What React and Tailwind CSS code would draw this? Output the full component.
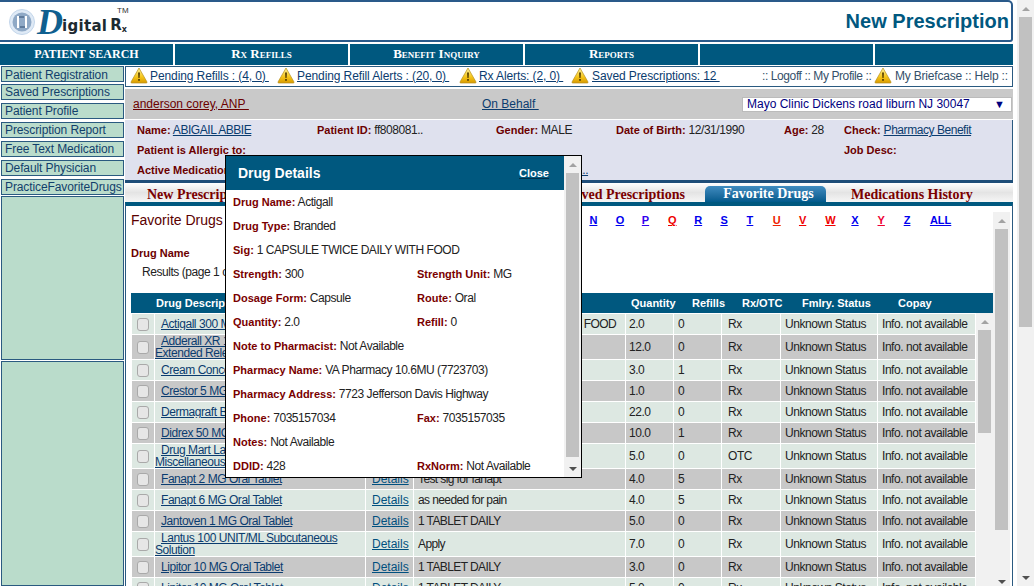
import React from "react";

const sidebarLinks = [
  "Patient Registration",
  "Saved Prescriptions",
  "Patient Profile",
  "Prescription Report",
  "Free Text Medication",
  "Default Physician",
  "PracticeFavoriteDrugs",
];

const letters = [
  ["A", "text-[#0000ee]"], ["B", "text-[#0000ee]"], ["C", "text-[#0000ee]"], ["D", "text-[#0000ee]"],
  ["E", "text-[#0000ee]"], ["F", "text-[#0000ee]"], ["G", "text-[#0000ee]"], ["H", "text-[#0000ee]"],
  ["I", "text-[#0000ee]"], ["J", "text-[#0000ee]"], ["K", "text-[#0000ee]"], ["L", "text-[#0000ee]"],
  ["M", "text-[#0000ee]"], ["N", "text-[#0000ee]"], ["O", "text-[#0000ee]"], ["P", "text-[#3300ee]"],
  ["Q", "text-[#ee0000]"], ["R", "text-[#0000ee]"], ["S", "text-[#0000ee]"], ["T", "text-[#0000ee]"],
  ["U", "text-[#ee2200]"], ["V", "text-[#ee0000]"], ["W", "text-[#ee0000]"], ["X", "text-[#0000ee]"],
  ["Y", "text-[#ee0033]"], ["Z", "text-[#0000ee]"],
];

const drugs = [
  { name: ["Actigall 300 MG Oral Capsule"], sig: "1 CAPSULE TWICE DAILY WITH FOOD", qty: "2.0", refills: "0", type: "Rx" },
  { name: ["Adderall XR 10 MG 24 HR", "Extended Release Capsule"], sig: "1 CAPSULE DAILY", qty: "12.0", refills: "0", type: "Rx" },
  { name: ["Cream Concentrate"], sig: "Apply", qty: "3.0", refills: "1", type: "Rx" },
  { name: ["Crestor 5 MG Oral Tablet"], sig: "1 TABLET DAILY", qty: "1.0", refills: "0", type: "Rx" },
  { name: ["Dermagraft Bandage"], sig: "Apply", qty: "22.0", refills: "0", type: "Rx" },
  { name: ["Didrex 50 MG Oral Tablet"], sig: "1 TABLET DAILY", qty: "10.0", refills: "1", type: "Rx" },
  { name: ["Drug Mart Laxative", "Miscellaneous"], sig: "1 TABLET DAILY", qty: "5.0", refills: "0", type: "OTC" },
  { name: ["Fanapt 2 MG Oral Tablet"], sig: "Test sig for fanapt", qty: "4.0", refills: "5", type: "Rx" },
  { name: ["Fanapt 6 MG Oral Tablet"], sig: "as needed for pain", qty: "4.0", refills: "5", type: "Rx" },
  { name: ["Jantoven 1 MG Oral Tablet"], sig: "1 TABLET DAILY", qty: "5.0", refills: "0", type: "Rx" },
  { name: ["Lantus 100 UNIT/ML Subcutaneous", "Solution"], sig: "Apply", qty: "7.0", refills: "0", type: "Rx" },
  { name: ["Lipitor 10 MG Oral Tablet"], sig: "1 TABLET DAILY", qty: "3.0", refills: "0", type: "Rx" },
  { name: ["Lipitor 10 MG Oral Tablet"], sig: "1 TABLET DAILY", qty: "5.0", refills: "0", type: "Rx" },
];

function Warning() {
  return (
    <svg width="18" height="17" viewBox="0 0 18 17" className="shrink-0">
      <defs>
        <linearGradient id="warn" x1="0" y1="0" x2="0" y2="1">
          <stop offset="0" stopColor="#fff3a0" />
          <stop offset="0.6" stopColor="#f5c518" />
          <stop offset="1" stopColor="#d99a00" />
        </linearGradient>
      </defs>
      <path d="M9 1 L17 15 Q17.5 16 16 16 L2 16 Q0.5 16 1 15 Z" fill="url(#warn)" stroke="#b8901c" strokeWidth="0.7" />
      <path d="M8 5.5 H10 L9.6 11 H8.4 Z" fill="#5a4200" />
      <rect x="8.1" y="12" width="1.8" height="1.8" fill="#5a4200" />
    </svg>
  );
}

function Scrollbar({ thumbHeight, arrows = true, className = "" }) {
  return (
    <div className={`flex flex-col items-center bg-[#f1f1f1] shrink-0 w-[17px] ${className}`}>
      <div className="h-[17px] w-full flex items-center justify-center shrink-0">
        <div className="w-0 h-0 border-x-[4px] border-x-transparent border-b-[4px] border-b-[#a3a3a3]" />
      </div>
      <div className="flex-1 w-full px-[2px] flex flex-col min-h-0">
        <div style={{ height: thumbHeight }} className="bg-[#c1c1c1] shrink-0" />
      </div>
      {arrows && (
        <div className="h-[17px] w-full flex items-center justify-center shrink-0">
          <div className="w-0 h-0 border-x-[4px] border-x-transparent border-t-[4px] border-t-[#505050]" />
        </div>
      )}
    </div>
  );
}

function Logo() {
  return (
    <div className="flex items-start h-full pl-[9px] relative tracking-normal">
      <svg width="26" height="26" viewBox="0 0 26 26" className="mt-[7px]">
        <circle cx="13" cy="13" r="12.5" fill="#dfeaf6" stroke="#c3d6ea" />
        <circle cx="13" cy="13" r="9.5" fill="#8fa9c6" />
        <path d="M9 7 V19 M17 7 V19" stroke="#ffffff" strokeWidth="2" fill="none" />
        <path d="M10 8 H15 M11 18 H16" stroke="#2f4d70" strokeWidth="1" fill="none" />
      </svg>
      <span className="text-[36px] leading-[36px] mt-[2px] ml-[2px] italic font-bold text-[#0f5f8f] font-['Liberation_Serif',serif] w-[25px]">
        D
      </span>
      <span className="text-[15px] leading-[20px] mt-[14px] font-bold text-[#1d2a30] font-['DejaVu_Sans',sans-serif] tracking-[0.3px]">
        igital
      </span>
      <span className="text-[15px] leading-[18px] mt-[14px] ml-[3px] font-bold text-[#1d2a30] font-['DejaVu_Sans',sans-serif]">
        R
      </span>
      <span className="text-[8px] leading-[10px] mt-[23px] font-bold text-[#1d2a30] font-['DejaVu_Sans',sans-serif]">
        x
      </span>
      <span className="absolute left-[117px] top-[5px] text-[8px] leading-[8px] text-[#333]">TM</span>
    </div>
  );
}

function NavCell({ children, caps, className = "" }) {
  return (
    <div
      className={`h-full bg-[#00587f] flex items-center justify-center pb-[1px] text-white font-bold tracking-normal font-['Liberation_Serif',serif] ${
        caps ? "text-[13px] [font-variant:small-caps]" : "text-[12px]"
      } ${className}`}
    >
      {children}
    </div>
  );
}

function Field({ label, children, className = "" }) {
  return (
    <div className={`shrink-0 whitespace-nowrap ${className}`}>
      <span className="font-bold text-[11px] tracking-normal text-[#6b0000]">{label}</span> {children}
    </div>
  );
}

function ModalRow({ left, right }) {
  return (
    <div className="h-[24px] flex items-center pl-[7px] whitespace-nowrap text-[#222]">
      <div className={right ? "w-[184px] shrink-0" : ""}>
        <span className="font-bold text-[11px] tracking-normal text-[#7a0000]">{left[0]}:</span> {left[1]}
      </div>
      {right && (
        <div>
          <span className="font-bold text-[11px] tracking-normal text-[#7a0000]">{right[0]}:</span> {right[1]}
        </div>
      )}
    </div>
  );
}

function DrugModal() {
  return (
    <div className="absolute left-[225px] top-[155px] w-[357px] h-[323px] bg-white border border-black flex overflow-hidden">
      <div className="flex-1 min-w-0">
        <div className="h-[34px] bg-[#00587f] flex items-center justify-between pl-[12px] pr-[15px] text-white font-bold tracking-normal">
          <span className="text-[14px]">Drug Details</span>
          <span className="text-[11px] underline decoration-[#00304a]">Close</span>
        </div>
        <ModalRow left={["Drug Name", "Actigall"]} />
        <ModalRow left={["Drug Type", "Branded"]} />
        <ModalRow left={["Sig", "1 CAPSULE TWICE DAILY WITH FOOD"]} />
        <ModalRow left={["Strength", "300"]} right={["Strength Unit", "MG"]} />
        <ModalRow left={["Dosage Form", "Capsule"]} right={["Route", "Oral"]} />
        <ModalRow left={["Quantity", "2.0"]} right={["Refill", "0"]} />
        <ModalRow left={["Note to Pharmacist", "Not Available"]} />
        <ModalRow left={["Pharmacy Name", "VA Pharmacy 10.6MU (7723703)"]} />
        <ModalRow left={["Pharmacy Address", "7723 Jefferson Davis Highway"]} />
        <ModalRow left={["Phone", "7035157034"]} right={["Fax", "7035157035"]} />
        <ModalRow left={["Notes", "Not Available"]} />
        <ModalRow left={["DDID", "428"]} right={["RxNorm", "Not Available"]} />
      </div>
      <Scrollbar thumbHeight={284} />
    </div>
  );
}

function DrugTable() {
  return (
    <table className="table-fixed border-separate border-spacing-[1px] w-[845px] shrink-0 text-[#222]">
      <colgroup>
        <col className="w-[22px]" />
        <col className="w-[210px]" />
        <col className="w-[47px]" />
        <col className="w-[211px]" />
        <col className="w-[47px]" />
        <col className="w-[47px]" />
        <col className="w-[58px]" />
        <col className="w-[96px]" />
        <col className="w-[97px]" />
      </colgroup>
      <tbody>
        {drugs.map((d, i) => {
          const bg = i % 2 === 0 ? "bg-[#dde8e2]" : "bg-[#c8c8c8]";
          const h = d.name.length > 1 ? "h-[24px]" : "h-[20px]";
          return (
            <tr key={i}>
              <td className={`${bg} ${h} p-0 text-center`}>
                <input
                  type="checkbox"
                  readOnly
                  className="appearance-none block mx-auto w-[12px] h-[13px] rounded-[3px] bg-[#e6e6e6] border border-[#a9a9a9]"
                />
              </td>
              <td className={`${bg} p-0 leading-[12px] text-[#0b3c6f] underline`}>
                <div className="indent-[6px] whitespace-nowrap overflow-hidden">
                  {d.name[0]}
                  {d.name[1] && <br />}
                  {d.name[1]}
                </div>
              </td>
              <td className={`${bg} p-0 pl-[6px] tracking-normal text-[#00507f] underline`}>Details</td>
              <td className={`${bg} p-0 pl-[4px] tracking-[-0.6px] whitespace-nowrap overflow-hidden`}>{d.sig}</td>
              <td className={`${bg} p-0 pl-[3px]`}>{d.qty}</td>
              <td className={`${bg} p-0 pl-[4px]`}>{d.refills}</td>
              <td className={`${bg} p-0 pl-[6px]`}>{d.type}</td>
              <td className={`${bg} p-0 pl-[4px] whitespace-nowrap`}>Unknown Status</td>
              <td className={`${bg} p-0 pl-[4px] whitespace-nowrap`}>Info. not available</td>
            </tr>
          );
        })}
      </tbody>
    </table>
  );
}

export default function App() {
  return (
    <div className="relative flex h-[586px] w-[1034px] overflow-hidden bg-white font-['Liberation_Sans',Arial,sans-serif] text-[12px] tracking-[-0.45px] text-[#222]">
      <div className="w-[1017px] shrink-0 flex flex-col">
        {/* top banner */}
        <div className="h-[42px] w-[1013px] shrink-0 border-t-[2px] border-b-[2px] border-r-[2px] border-[#2a5a8a] rounded-tr-[5px] rounded-br-[3px] flex items-center justify-between">
          <Logo />
          <span className="text-[20px] tracking-normal font-bold text-[#00587f] pr-[2px]">New Prescription</span>
        </div>

        {/* main nav */}
        <div className="mt-[2px] h-[21px] w-[1013px] shrink-0 flex gap-[2px]">
          <NavCell className="w-[173px]">PATIENT SEARCH</NavCell>
          <NavCell caps className="w-[173px]">Rx Refills</NavCell>
          <NavCell caps className="w-[173px]">Benefit Inquiry</NavCell>
          <NavCell caps className="w-[173px]">Reports</NavCell>
          <NavCell className="w-[173px]" />
          <NavCell className="flex-1" />
        </div>

        <div className="mt-[1px] flex-1 flex min-h-0 w-[1013px]">
          {/* left menu */}
          <div className="w-[124px] shrink-0 flex flex-col pl-[1px]">
            <div className="flex flex-col gap-[3px]">
              {sidebarLinks.map((l, i) => (
                <div
                  key={l}
                  className={`h-[16px] bg-[#badccb] border border-[#2a5a80] pl-[3px] flex items-center whitespace-nowrap tracking-[-0.1px] text-[#123f6b] ${
                    i === 0 ? "pt-[2px]" : ""
                  } ${i === 1 ? "mt-[-1px]" : ""}`}
                >
                  {l}
                </div>
              ))}
            </div>
            <div className="mt-[1px] h-[164px] bg-[#badccb] border border-[#2a5a80] shrink-0" />
            <div className="mt-[1px] flex-1 bg-[#badccb] border border-[#2a5a80]" />
          </div>

          <div className="ml-[1px] flex-1 min-w-0 flex flex-col">
            {/* alerts */}
            <div className="h-[21px] shrink-0 border border-[#2a5a80] flex items-center pl-[4px] pb-[2px] whitespace-nowrap tracking-[-0.1px] text-[#0b3c6f]">
              <div className="w-[147px] shrink-0 flex items-center gap-[2px]">
                <Warning />
                <span className="underline">Pending Refills : (4, 0)&nbsp;</span>
              </div>
              <div className="w-[182px] shrink-0 flex items-center gap-[2px]">
                <Warning />
                <span className="underline">Pending Refill Alerts : (20, 0)&nbsp;</span>
              </div>
              <div className="w-[112px] shrink-0 flex items-center gap-[2px]">
                <Warning />
                <span className="underline">Rx Alerts: (2, 0)&nbsp;</span>
              </div>
              <div className="w-[191px] shrink-0 flex items-center gap-[3px]">
                <Warning />
                <span className="underline">Saved Prescriptions: 12&nbsp;</span>
              </div>
              <span className="w-[112px] shrink-0 text-[#34506a] tracking-[-0.4px]">:: Logoff :: My Profile ::</span>
              <Warning />
              <span className="ml-[3px] text-[#34506a] tracking-[-0.2px]">My Briefcase :: Help ::</span>
            </div>

            {/* prescriber bar */}
            <div className="mt-[2px] h-[30px] shrink-0 bg-[#c9c9c9] flex items-center pl-[8px] pr-[1px] whitespace-nowrap tracking-normal">
              <span className="w-[349px] shrink-0 text-[#6b0000] underline">anderson corey, ANP&nbsp;</span>
              <span className="text-[#0b3c6f] underline">On Behalf&nbsp;</span>
              <div className="ml-auto w-[270px] h-[15px] bg-white border border-[#bbb] flex items-center justify-between pl-[4px] pr-[6px] text-[#00007f]">
                <span>Mayo Clinic Dickens road liburn NJ 30047</span>
                <span className="text-[11px]">▼</span>
              </div>
            </div>

            {/* patient box */}
            <div className="mt-[1px] h-[60px] shrink-0 bg-[#dfe1ee] border-r border-[#2a5a80] pl-[12px] flex flex-col">
              <div className="h-[20px] shrink-0 flex items-center">
                <Field label="Name:" className="w-[180px]">
                  <span className="text-[#0b3c6f] underline">ABIGAIL ABBIE</span>
                </Field>
                <Field label="Patient ID:" className="w-[179px]">ff808081..</Field>
                <Field label="Gender:" className="w-[120px]">MALE</Field>
                <Field label="Date of Birth:" className="w-[168px]">12/31/1990</Field>
                <Field label="Age:" className="w-[60px]">28</Field>
                <Field label="Check:">
                  <span className="text-[#0b3c6f] underline">Pharmacy Benefit</span>
                </Field>
              </div>
              <div className="h-[20px] shrink-0 flex items-center">
                <Field label="Patient is Allergic to:" className="w-[707px]" />
                <Field label="Job Desc:" />
              </div>
              <div className="h-[20px] shrink-0 flex items-center">
                <Field label="Active Medications:">
                  <span className="text-[#0b3c6f] underline">Actigall, Adderall XR, Cream Concentrate, Crestor, Dermagraft, Didre...</span>
                </Field>
              </div>
            </div>
            <div className="h-[3px] shrink-0 bg-[#1f4e79]" />

            {/* tabs */}
            <div className="h-[19px] shrink-0 pt-[3px] flex items-end bg-gradient-to-b from-white via-[#e4e4e4] to-[#f6f6f6] whitespace-nowrap tracking-normal font-['Liberation_Serif',serif] font-bold text-[14px] text-[#7a0000]">
              <span className="ml-[22px] w-[200px] shrink-0 leading-[15px]">New Prescription</span>
              <span className="w-[173px] shrink-0 leading-[15px]">Rx Pad</span>
              <span className="w-[130px] shrink-0 leading-[15px] text-right ml-[35px]">Saved Prescriptions</span>
              <span className="ml-[20px] w-[121px] shrink-0 pl-[6px] h-[16px] leading-[16px] rounded-t-[5px] bg-gradient-to-b from-[#3f8cc0] to-[#005a8c] text-white text-center">
                Favorite Drugs
              </span>
              <span className="ml-[25px] leading-[15px]">Medications History</span>
            </div>

            {/* favorite drugs panel */}
            <div className="flex-1 min-h-0 border-t-[4px] border-t-[#00587f] border-x border-x-[#2a5a80] flex">
              <div className="w-[867px] shrink-0 flex flex-col pl-[5px]">
                <div className="h-[27px] mt-[1px] flex items-center whitespace-nowrap">
                  <span className="text-[14px] tracking-normal text-[#5a0000] w-[118px] shrink-0">Favorite Drugs</span>
                  {letters.map(([l, c]) => (
                    <span key={l} className={`w-[26.2px] shrink-0 text-[11px] tracking-normal font-bold underline ${c}`}>
                      {l}
                    </span>
                  ))}
                  <span className="text-[11px] tracking-normal font-bold underline text-[#0000ee]">ALL</span>
                </div>
                <div className="mt-[7px] h-[24px] flex items-center font-bold text-[11px] tracking-normal text-[#6b0000]">Drug Name</div>
                <div className="h-[14px] flex items-center pl-[11px]">Results (page 1 of 1)</div>
                <div className="mt-[14px] h-[20px] shrink-0 bg-[#00587f] w-[862px] flex items-center whitespace-nowrap text-white font-bold text-[11px] tracking-normal">
                  <span className="ml-[25px] w-[210px] shrink-0">Drug Description</span>
                  <span className="w-[265px] shrink-0">Details &nbsp; Sig</span>
                  <span className="w-[61px] shrink-0">Quantity</span>
                  <span className="w-[50px] shrink-0">Refills</span>
                  <span className="w-[60px] shrink-0">Rx/OTC</span>
                  <span className="w-[96px] shrink-0">Fmlry. Status</span>
                  <span>Copay</span>
                </div>
                <div className="flex flex-1 min-h-0">
                  <DrugTable />
                  <Scrollbar thumbHeight={103} arrows={false} />
                </div>
              </div>
              <Scrollbar thumbHeight={301} className="mt-[6px] h-[378px]" />
            </div>
          </div>
        </div>
      </div>

      {/* browser scrollbar */}
      <Scrollbar thumbHeight={310} />

      <DrugModal />
    </div>
  );
}
